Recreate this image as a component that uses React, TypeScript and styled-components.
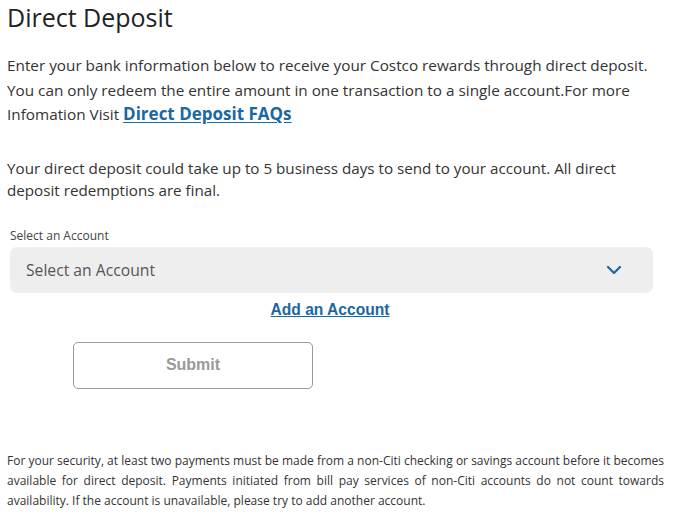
import React from "react";
import styled, { createGlobalStyle } from "styled-components";

const Global = createGlobalStyle`
  body { margin: 0; background: #fff; font-family: "Open Sans", "Liberation Sans", sans-serif; color: #333; }
`;

const Page = styled.div`
  width: 675px;
  padding: 0 7px;
  box-sizing: border-box;
`;

const Title = styled.h1`
  margin: 0;
  padding-top: 1px;
  font-size: 25px;
  font-weight: 400;
  line-height: 32px;
  color: #222;
`;

const Para = styled.p<{ $lh: number; $mt: number; $size: number }>`
  margin: ${(p) => p.$mt}px 0 0;
  font-size: ${(p) => p.$size}px;
  line-height: ${(p) => p.$lh}px;
  color: #333;
  white-space: nowrap;
`;

const Link = styled.a`
  color: #1a67a3;
  font-weight: 700;
  font-size: 17px;
  text-decoration: underline;
  text-underline-offset: 2px;
`;

const Field = styled.div`
  margin-top: 27px;
  padding-left: 3px;
  display: flex;
  flex-direction: column;
`;

const Label = styled.label`
  font-family: "Liberation Sans Narrow", "Open Sans", sans-serif;
  font-size: 12px;
  color: #444;
  line-height: 16px;
`;

const SelectBox = styled.div`
  margin-top: 3px;
  height: 46px;
  width: 643px;
  background: #eeeeee;
  border-radius: 7px;
  display: flex;
  align-items: center;
  justify-content: space-between;
  padding: 0 31px 0 16px;
  box-sizing: border-box;
  font-size: 15.7px;
  color: #555;
`;

const AddRow = styled.div`
  display: flex;
  justify-content: center;
  margin-top: 8px;
  padding-right: 15px;
`;

const AddLink = styled.a`
  font-family: "Liberation Sans", Arial, sans-serif;
  font-weight: 700;
  font-size: 15.6px;
  color: #1a67a3;
  text-decoration: underline;
  line-height: 18px;
`;

const ButtonRow = styled.div`
  margin-top: 23px;
  padding-left: 66px;
`;

const SubmitButton = styled.button`
  width: 240px;
  height: 47px;
  background: #fff;
  border: 1px solid #9a9a9a;
  border-radius: 5px;
  font-family: "Liberation Sans", Arial, sans-serif;
  font-weight: 700;
  font-size: 16px;
  color: #999;
`;

const Footer = styled.p`
  margin: 62px 0 0;
  padding-right: 4px;
  font-family: "Liberation Sans Narrow", "Open Sans", sans-serif;
  font-size: 12px;
  line-height: 20px;
  color: #333;
  text-align: justify;
`;

export default function App() {
  return (
    <Page>
      <Global />
      <Title>Direct Deposit</Title>
      <Para $mt={20} $lh={24.5} $size={15.3}>
        Enter your bank information below to receive your Costco rewards through direct deposit.
        <br />
        You can only redeem the entire amount in one transaction to a single account.For more
        <br />
        Infomation Visit <Link href="#">Direct Deposit FAQs</Link>
      </Para>
      <Para $mt={30} $lh={22} $size={15.2}>
        Your direct deposit could take up to 5 business days to send to your account. All direct
        <br />
        deposit redemptions are final.
      </Para>
      <Field>
        <Label>Select an Account</Label>
        <SelectBox>
          <span>Select an Account</span>
          <svg width="16" height="10" viewBox="0 0 16 10">
            <path d="M2 2 L8 8 L14 2" fill="none" stroke="#1a67a3" strokeWidth="2.2" strokeLinecap="round" strokeLinejoin="round" />
          </svg>
        </SelectBox>
      </Field>
      <AddRow>
        <AddLink href="#">Add an Account</AddLink>
      </AddRow>
      <ButtonRow>
        <SubmitButton>Submit</SubmitButton>
      </ButtonRow>
      <Footer>
        For your security, at least two payments must be made from a non-Citi checking or savings account before it becomes
        available for direct deposit. Payments initiated from bill pay services of non-Citi accounts do not count towards
        availability. If the account is unavailable, please try to add another account.
      </Footer>
    </Page>
  );
}
